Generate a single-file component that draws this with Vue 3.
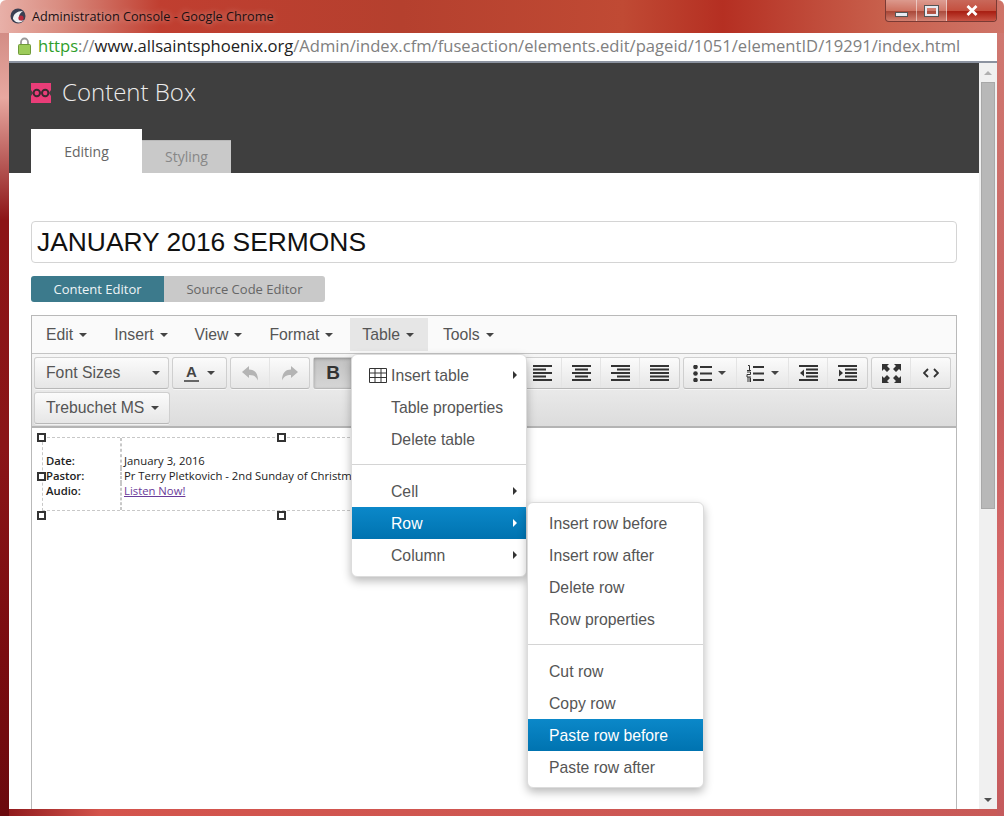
<script setup>
const menuNames = ['Edit', 'Insert', 'View', 'Format', 'Table', 'Tools']
const tableMenuTop = [
  { label: 'Insert table', icon: true, arrow: true },
  { label: 'Table properties' },
  { label: 'Delete table' }
]
const tableMenuBottom = [
  { label: 'Cell', arrow: true },
  { label: 'Row', arrow: true, active: true },
  { label: 'Column', arrow: true }
]
const rowMenuTop = ['Insert row before', 'Insert row after', 'Delete row', 'Row properties']
const rowMenuBottom = [
  { label: 'Cut row' },
  { label: 'Copy row' },
  { label: 'Paste row before', active: true },
  { label: 'Paste row after' }
]
const aligns = [
  'M0 1h19M0 4.500h13M0 8h19M0 11.500h13M0 15h19',
  'M0 1h19M3 4.500h13M0 8h19M3 11.500h13M0 15h19',
  'M0 1h19M6 4.500h13M0 8h19M6 11.500h13M0 15h19',
  'M0 1h19M0 4.500h19M0 8h19M0 11.500h19M0 15h19'
]
const rows = [
  { key: 'Date:', value: 'January 3, 2016' },
  { key: 'Pastor:', value: 'Pr Terry Pletkovich - 2nd Sunday of Christmas' },
  { key: 'Audio:', value: 'Listen Now!', link: true }
]
</script>

<template>
  <div class="window">
    <div class="titlebar">
      <svg class="favicon" width="16" height="16" viewBox="0 0 16 16">
        <circle cx="8" cy="8" r="7.5" fill="#3b3f52" />
        <path d="M3 11C3 6 7 3 13 3c-3 2-4 4-4 6 0 3 3 4 5 3-2 3-8 4-11-1z" fill="#f2f2f4" />
        <circle cx="11" cy="10" r="2.6" fill="#b8283a" />
      </svg>
      <span class="win-title">Administration Console - Google Chrome</span>
      <div class="win-buttons">
        <div class="wb wb-min"><i></i></div>
        <div class="wb wb-max"><i></i></div>
        <div class="wb wb-close">
          <svg width="12" height="11" viewBox="0 0 12 11"><path d="M1.5 1l9 9M10.5 1l-9 9" stroke="#fff" stroke-width="2.8" fill="none" /></svg>
        </div>
      </div>
    </div>

    <div class="address">
      <svg class="lock" width="13" height="18" viewBox="0 0 13 18">
        <path d="M3 8V5a3.5 3.5 0 0 1 7 0v3" fill="none" stroke="#9a9a9a" stroke-width="1.8" />
        <rect x="0.5" y="7.5" width="12" height="10" rx="1" fill="#9ccb5a" stroke="#6f9a3a" />
      </svg>
      <span class="url"><span class="u-green">https</span><span class="u-gray">://</span><span class="u-dark">www.allsaintsphoenix.org</span><span class="u-gray">/Admin/index.cfm/fuseaction/elements.edit/pageid/1051/elementID/19291/index.html</span></span>
    </div>

    <div class="page">
      <div class="main">
        <header class="header">
          <div class="brand">
            <svg width="20" height="20" viewBox="0 0 20 20">
              <rect width="20" height="20" fill="#e93d78" />
              <path d="M0 7l2 3-2 3zM20 7l-2 3 2 3z" fill="#3f3f3f" />
              <circle cx="5.800" cy="10" r="3.200" fill="#e93d78" stroke="#3a2a30" stroke-width="2" />
              <circle cx="14.200" cy="10" r="3.200" fill="#e93d78" stroke="#3a2a30" stroke-width="2" />
            </svg>
            <span class="brand-text">Content Box</span>
          </div>
          <div class="tabs">
            <div class="tab tab-on">Editing</div>
            <div class="tab tab-off">Styling</div>
          </div>
        </header>

        <div class="body">
          <div class="title-input">JANUARY 2016 SERMONS</div>
          <div class="switch">
            <div class="sw sw-on">Content Editor</div>
            <div class="sw sw-off">Source Code Editor</div>
          </div>

          <div class="editor">
            <div class="menubar">
              <div v-for="m in menuNames" :key="m" class="mb-item" :class="{ 'mb-on': m === 'Table' }">
                {{ m }}<span class="caret"></span>
              </div>
            </div>

            <div class="toolbar">
              <div class="group"><div class="btn btn-select">Font Sizes<span class="caret"></span></div></div>
              <div class="group">
                <div class="btn btn-color"><span class="color-a">A</span><span class="caret"></span></div>
              </div>
              <div class="group">
                <div class="btn btn-i">
                  <svg width="18" height="17" viewBox="0 0 18 17"><path d="M1 7l7-6v3.5c5 0 9 3 9 11-2-4-4-5.500-9-5.500V13z" fill="#b4b4b4" /></svg>
                </div>
                <div class="btn btn-i">
                  <svg width="18" height="17" viewBox="0 0 18 17"><path d="M17 7l-7-6v3.500c-5 0-9 3-9 11 2-4 4-5.500 9-5.500V13z" fill="#b4b4b4" /></svg>
                </div>
              </div>
              <div class="group">
                <div class="btn btn-i btn-pressed"><b class="bold">B</b></div>
                <div v-for="n in 4" :key="n" class="btn btn-hidden"></div>
                <div v-for="(d, i) in aligns" :key="i" class="btn btn-i">
                  <svg width="19" height="16" viewBox="0 0 19 16"><path :d="d" stroke="#333" stroke-width="2" fill="none" /></svg>
                </div>
              </div>
              <div class="group">
                <div class="btn btn-list">
                  <svg width="19" height="17" viewBox="0 0 19 17">
                    <circle cx="2.500" cy="2" r="2.300" fill="#333" /><circle cx="2.500" cy="8.500" r="2.300" fill="#333" /><circle cx="2.500" cy="15" r="2.300" fill="#333" />
                    <path d="M7 2h12M7 8.500h12M7 15h12" stroke="#333" stroke-width="2" />
                  </svg><span class="caret"></span>
                </div>
                <div class="btn btn-list">
                  <svg width="19" height="17" viewBox="0 0 19 17">
                    <path d="M2 0.500h1.500v4.500M1 5.500h4M1 7h3.500v2.500H1v2.500h4M1 13h3.500v4M1 15h3M1 17h3.500" stroke="#333" stroke-width="1" fill="none" />
                    <path d="M7 2h11M7 8.500h11M7 15h11" stroke="#333" stroke-width="2" />
                  </svg><span class="caret"></span>
                </div>
                <div class="btn btn-i">
                  <svg width="19" height="16" viewBox="0 0 19 16">
                    <path d="M0 1h19M7 4.500h12M7 8h12M7 11.500h12M0 15h19" stroke="#333" stroke-width="2" fill="none" />
                    <path d="M5 4.500v7l-4-3.500z" fill="#333" />
                  </svg>
                </div>
                <div class="btn btn-i">
                  <svg width="19" height="16" viewBox="0 0 19 16">
                    <path d="M0 1h19M7 4.500h12M7 8h12M7 11.500h12M0 15h19" stroke="#333" stroke-width="2" fill="none" />
                    <path d="M1 4.500v7l4-3.500z" fill="#333" />
                  </svg>
                </div>
              </div>
              <div class="group">
                <div class="btn btn-i">
                  <svg width="19" height="19" viewBox="0 0 19 19">
                    <path d="M0 0h7L5 2l3 3-3 3-3-3-2 2zM19 0v7l-2-2-3 3-3-3 3-3-2-2zM0 19v-7l2 2 3-3 3 3-3 3 2 2zM19 19h-7l2-2-3-3 3-3 3 3 2-2z" fill="#333" />
                  </svg>
                </div>
                <div class="btn btn-i">
                  <svg width="16" height="10" viewBox="0 0 16 10"><path d="M5 1L1 5l4 4M11 1l4 4-4 4" stroke="#333" stroke-width="1.800" fill="none" /></svg>
                </div>
              </div>
              <div class="group"><div class="btn btn-select btn-font">Trebuchet MS<span class="caret"></span></div></div>
            </div>

            <div class="content">
              <table class="sermon">
                <tbody>
                  <tr v-for="r in rows" :key="r.key">
                    <td class="k">{{ r.key }}</td>
                    <td class="v"><span :class="{ link: r.link }">{{ r.value }}</span></td>
                  </tr>
                </tbody>
              </table>
              <i class="handle h-tl"></i>
              <i class="handle h-tm"></i>
              <i class="handle h-ml"></i>
              <i class="handle h-bl"></i>
              <i class="handle h-bm"></i>
            </div>

            <div class="menu menu-table">
              <div v-for="it in tableMenuTop" :key="it.label" class="mi">
                <svg v-if="it.icon" class="mi-icon" width="18" height="15" viewBox="0 0 18 15">
                  <path d="M.5.500h17v14H.5zM.5 5h17M.5 9.500h17M6 .5v14M12 .5v14" stroke="#333" fill="none" />
                </svg>
                {{ it.label }}<span v-if="it.arrow" class="arrow"></span>
              </div>
              <div class="sep sep-a"></div>
              <div v-for="it in tableMenuBottom" :key="it.label" class="mi" :class="{ 'mi-on': it.active }">
                {{ it.label }}<span class="arrow"></span>
              </div>
            </div>

            <div class="menu menu-row">
              <div v-for="t in rowMenuTop" :key="t" class="mi">{{ t }}</div>
              <div class="sep sep-b"></div>
              <div v-for="it in rowMenuBottom" :key="it.label" class="mi" :class="{ 'mi-on': it.active }">{{ it.label }}</div>
            </div>
          </div>
        </div>
      </div>

      <div class="scrollbar">
        <span class="sb-up"></span>
        <div class="thumb"></div>
        <span class="sb-down"></span>
      </div>
    </div>
  </div>
</template>

<style>
html, body { margin: 0; background: #fff; overflow: hidden; }
</style>

<style scoped>
.window {
  width: 1004px;
  height: 816px;
  box-sizing: border-box;
  padding: 0 7px 7px 9px;
  display: flex;
  flex-direction: column;
  overflow: hidden;
  position: relative;
  border-radius: 6px 6px 0 0;
  background:
    linear-gradient(90deg, #e8b0a8 0, #d98c80 6%, rgba(190, 60, 45, 0.9) 16%, #b5402e 40%, #c04a34 62%, #b52f22 72%, #c8604c 88%, #cf7468 100%) top / 100% 33px no-repeat,
    linear-gradient(180deg, #c87f78 0, #e8a8a0 12%, #8c1416 27%, #8a1518 55%, #7a0c10 80%, #6b0a0e 100%) left / 9px 100% no-repeat,
    linear-gradient(180deg, #d07a72 0, #c85f5f 50%, #d86a6a 75%, #c45a5c 100%) right / 7px 100% no-repeat,
    linear-gradient(90deg, #8a1518 0, #d4544c 10%, #c85a58 100%);
  font-family: "Liberation Sans", Arial, sans-serif;
}
.titlebar {
  height: 33px;
  flex: none;
  display: flex;
  align-items: flex-start;
  margin-right: -7px;
}
.favicon { margin: 8px 0 0 1px; flex: none; }
.win-title {
  margin: 8px 0 0 6px;
  font: 12.7px/16px "Open Sans", sans-serif;
  color: #1a1012;
  text-shadow: 0 0 6px rgba(255, 255, 255, 0.55);
}
.win-buttons {
  margin-left: auto;
  margin-right: 7px;
  display: flex;
  height: 21px;
  border: 1px solid #7a3a34;
  border-top: 0;
  border-radius: 0 0 4px 4px;
  overflow: hidden;
}
.wb {
  display: flex;
  align-items: center;
  justify-content: center;
  background: linear-gradient(180deg, rgba(255, 255, 255, 0.35), rgba(255, 255, 255, 0.1) 50%, rgba(120, 30, 20, 0.4) 55%, rgba(255, 255, 255, 0.18));
  border-right: 1px solid rgba(255, 255, 255, 0.5);
}
.wb-min { width: 30px; }
.wb-max { width: 29px; }
.wb-close {
  width: 49px;
  border-right: 0;
  background: linear-gradient(180deg, #c9685a, #c4503f 50%, #a81e12 55%, #c85445);
}
.wb-min i { width: 11px; height: 3px; margin-top: 7px; background: #e8eaf2; border: 1px solid #555; display: block; }
.wb-max i { width: 9px; height: 6px; border: 2px solid #e8eaf2; outline: 1px solid #555; display: block; }
.address {
  height: 30px;
  flex: none;
  box-sizing: border-box;
  background: #fff;
  border-bottom: 2px solid #8c93a0;
  display: flex;
  align-items: center;
  padding-left: 9px;
}
.lock { flex: none; margin-bottom: 2px; }
.url {
  margin-left: 7px;
  font: 16.6px/20px "Open Sans", sans-serif;
  white-space: nowrap;
  margin-bottom: 2px;
}
.u-green { color: #2f9e2a; }
.u-gray { color: #808080; }
.u-dark { color: #222; }
.page {
  flex: 1;
  min-height: 0;
  display: flex;
  background: #fff;
}
.main {
  flex: 1;
  min-width: 0;
  display: flex;
  flex-direction: column;
  overflow: hidden;
}
.header {
  height: 110px;
  flex: none;
  box-sizing: border-box;
  background: #3f3f3f;
  padding: 17px 0 0 22px;
  display: flex;
  flex-direction: column;
}
.brand { display: flex; align-items: center; gap: 11px; height: 24px; margin-left: 0; }
.brand svg { margin-top: 2px; }
.brand-text {
  font: 300 24px/24px "Open Sans", sans-serif;
  color: #ececec;
}
.tabs {
  margin-top: auto;
  display: flex;
  align-items: flex-end;
}
.tab {
  font: 14px/1 "Open Sans", sans-serif;
  display: flex;
  align-items: center;
  justify-content: center;
}
.tab-on {
  width: 111px;
  height: 44px;
  background: #fff;
  color: #666;
  padding-top: 2px;
  box-sizing: border-box;
}
.tab-off {
  width: 89px;
  height: 33px;
  background: #c9c9c9;
  color: #878787;
  border-top: 1px solid #b8b8b8;
  box-sizing: border-box;
}
.body {
  flex: 1;
  min-height: 0;
  padding: 48px 22px 0;
  display: flex;
  flex-direction: column;
}
.title-input {
  height: 42px;
  flex: none;
  box-sizing: border-box;
  border: 1px solid #d4d4d4;
  border-radius: 4px;
  padding-left: 5px;
  font-size: 26.4px;
  line-height: 40px;
  color: #111;
}
.switch {
  display: flex;
  margin-top: 13px;
  flex: none;
  width: 294px;
  height: 26px;
  border-radius: 3px;
  overflow: hidden;
  font: 13px/26px "Open Sans", sans-serif;
  text-align: center;
}
.sw-on { width: 133px; background: #3c7a8c; color: #eef4f6; }
.sw-off { flex: 1; background: #c9c9c9; color: #666; }
.editor {
  margin-top: 13px;
  flex: 1;
  min-height: 0;
  position: relative;
  border: 1px solid #b9b9b9;
  border-bottom: 0;
  display: flex;
  flex-direction: column;
  font-size: 15.75px;
  color: #555;
}
.menubar {
  height: 37px;
  flex: none;
  display: flex;
  align-items: center;
  gap: 3px;
  padding-left: 2px;
  background: #fafafa;
  border-bottom: 1px solid #c4c4c4;
}
.mb-item {
  height: 33px;
  padding: 0 12px;
  display: flex;
  align-items: center;
  white-space: nowrap;
}
.mb-on { background: #e6e6e6; margin-left: 2px; padding-right: 14px; }
.caret {
  width: 0;
  height: 0;
  margin-left: 6px;
  border-left: 4px solid transparent;
  border-right: 4px solid transparent;
  border-top: 4px solid #444;
  flex: none;
}
.toolbar {
  flex: none;
  height: 74px;
  box-sizing: border-box;
  padding: 3px 2px;
  background: linear-gradient(180deg, #f6f6f6, #dcdcdc);
  border-bottom: 2px solid #b4b4b4;
  display: flex;
  flex-wrap: wrap;
  align-content: flex-start;
  gap: 3px;
}
.group {
  display: flex;
  height: 32px;
  box-sizing: border-box;
  border: 1px solid #cfcfcf;
  border-bottom-color: #b8b8b8;
  border-radius: 3px;
  background: linear-gradient(180deg, #fbfbfb, #e6e6e6);
  box-shadow: 0 1px 0 rgba(255, 255, 255, 0.6);
}
.btn {
  display: flex;
  align-items: center;
  justify-content: center;
  height: 100%;
  color: #555;
  white-space: nowrap;
  border-right: 1px solid #e4e4e4;
  box-sizing: border-box;
}
.btn:last-child { border-right: 0; }
.btn-select {
  width: 133px;
  justify-content: flex-start;
  padding-left: 11px;
}
.btn-select .caret { margin-left: auto; margin-right: 8px; }
.btn-font { width: 134px; }
.btn-font .caret { margin-left: 7px; }
.btn-color { width: 53px; }
.color-a {
  font-weight: 700;
  font-size: 15px;
  color: #444;
  border-bottom: 2px solid #666;
  line-height: 15px;
  padding: 0 2px 1px;
}
.btn-color .caret { margin-left: 8px; }
.btn-i { width: 39px; }
.btn-hidden { width: 42.5px; }
.btn-list { width: 52.5px; }
.btn-list .caret { margin-left: 6px; }
.btn-pressed {
  background: linear-gradient(180deg, #c2c2c2, #d6d6d6);
  box-shadow: inset 0 1px 3px rgba(0, 0, 0, 0.25);
}
.bold { font-size: 19px; color: #333; }
.content {
  flex: 1;
  min-height: 0;
  background: #fff;
  position: relative;
}
.sermon {
  position: absolute;
  left: 10px;
  top: 9px;
  width: 478px;
  height: 74px;
  border: 1px dashed #c8c8c8;
  border-collapse: separate;
  border-spacing: 0;
  font: 11.3px/15px "Open Sans", sans-serif;
  color: #222;
  table-layout: fixed;
}
.sermon td {
  padding: 0;
  white-space: nowrap;
  overflow: hidden;
}
.k {
  width: 74px;
  padding-left: 3px !important;
  font-weight: 600;
  border-right: 1px dashed #c8c8c8;
}
.v {
  padding-left: 2px !important;
  border-left: 1px dashed #c8c8c8;
}
.sermon tr:first-child td { padding-top: 15px; }
.sermon tr:last-child td { padding-bottom: 12px; }
.link { color: #6a3b9a; text-decoration: underline; }
.handle {
  position: absolute;
  width: 9px;
  height: 9px;
  box-sizing: border-box;
  border: 2px solid #333;
  background: #fff;
}
.h-tl { left: 5px; top: 5px; }
.h-tm { left: 245px; top: 5px; }
.h-ml { left: 5px; top: 44px; }
.h-bl { left: 5px; top: 83px; }
.h-bm { left: 245px; top: 83px; }
.menu {
  position: absolute;
  box-sizing: border-box;
  background: #fff;
  border: 1px solid #dcdcdc;
  border-radius: 6px;
  padding: 4px 0 0;
  box-shadow: 0 4px 10px rgba(0, 0, 0, 0.28);
}
.menu-table { left: 319px; top: 38px; width: 176px; height: 223px; z-index: 2; }
.menu-row { left: 495px; top: 186px; width: 177px; height: 286px; z-index: 3; }
.mi {
  height: 32px;
  line-height: 33px;
  padding-left: 21px;
  position: relative;
  color: #555;
  white-space: nowrap;
}
.menu-table .mi { padding-left: 39px; }
.mi-on {
  background: linear-gradient(180deg, #0b88c9, #0073b0);
  color: #fff;
}
.mi-icon { position: absolute; left: 17px; top: 9px; }
.arrow {
  position: absolute;
  right: 9px;
  top: 12px;
  width: 0;
  height: 0;
  border-top: 4px solid transparent;
  border-bottom: 4px solid transparent;
  border-left: 4px solid #333;
}
.mi-on .arrow { border-left-color: #fff; }
.sep { height: 1px; background: #d4d4d4; }
.sep-a { margin: 9px 0 10px; }
.sep-b { margin: 9px 0 10px; }
.scrollbar {
  width: 18px;
  flex: none;
  background: #f0f0f0;
  display: flex;
  flex-direction: column;
  align-items: center;
  position: relative;
}
.thumb {
  position: absolute;
  top: 19px;
  left: 2px;
  width: 14px;
  height: 427px;
  box-sizing: border-box;
  background: #b8b8b8;
  border: 1px solid #a8a8a8;
}
.sb-up, .sb-down {
  position: absolute;
  left: 5px;
  width: 0;
  height: 0;
  border-left: 4px solid transparent;
  border-right: 4px solid transparent;
}
.sb-up { top: 8px; border-bottom: 4px solid #b0b0b0; }
.sb-down { bottom: 7px; border-top: 4px solid #505050; }
</style>
